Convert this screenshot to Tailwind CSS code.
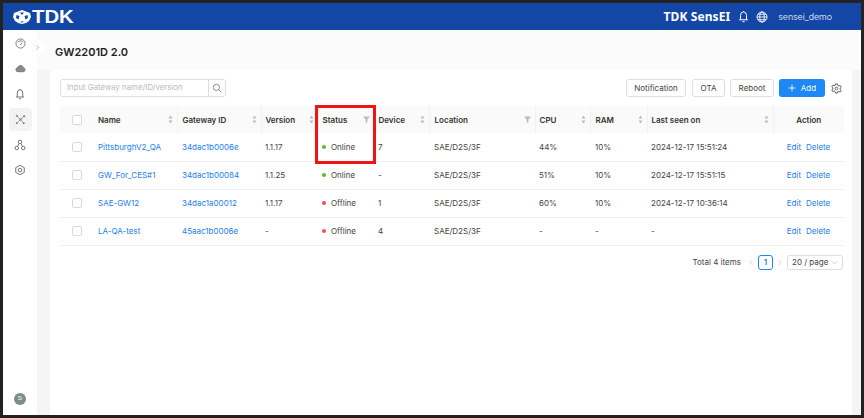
<!DOCTYPE html>
<html lang="en">
<head>
  <meta charset="UTF-8" />
  <title>TDK SensEI</title>
  <script src="https://cdn.jsdelivr.net/npm/@tailwindcss/browser@4"></script>
</head>
<body class="bg-[#222222] h-screen overflow-hidden font-['Inter',sans-serif] text-[8px] text-[#444444]">
  <div class="h-[418px] p-[3px] flex flex-col">

    <!-- top bar -->
    <header class="h-[27px] shrink-0 bg-[#1446a6] text-white flex items-center pl-[10px] pr-[29px]">
      <svg class="w-[18px] h-[14px]" viewBox="0 0 18 14">
        <path d="M9 0 13 1.500 17 3 18 7 16 11 13 13 9 14 5 13 2 11 0 7 1 3 5 1.500Z" fill="white" />
        <path d="M7 2.500h4L9 5ZM3.500 5 6.500 6 5.500 9.500 3 8ZM14.500 5 15 8 12.500 9.500 11.500 6ZM7 11.500h4L9 12.800Z" fill="#1446a6" />
      </svg>
      <span class="ml-[1px] font-['Liberation_Sans',sans-serif] font-bold text-[18px] leading-none scale-x-[1.13] origin-left">TDK</span>
      <span class="ml-auto font-['Noto_Sans',sans-serif] font-bold text-[12px] tracking-[0.1px]">TDK SensEI</span>
      <svg class="w-[13px] h-[13px] ml-[7px]" viewBox="0 0 24 24" fill="none" stroke="white" stroke-width="1.800">
        <path d="M6.500 18V10a5.500 6.500 0 0 1 11 0v8M4 18h16M10 21.500h4M12 3.500V2" />
      </svg>
      <svg class="w-[12px] h-[12px] ml-[6px]" viewBox="0 0 24 24" fill="none" stroke="white" stroke-width="1.800">
        <circle cx="12" cy="12" r="10" /><ellipse cx="12" cy="12" rx="4.500" ry="10" /><path d="M2 12h20M4 6.500h16M4 17.500h16" />
      </svg>
      <span class="ml-[10px] text-[8.800px] font-light">sensei_demo</span>
    </header>

    <div class="flex-1 flex min-h-0 relative">
      <!-- side nav -->
      <aside class="w-[34px] shrink-0 bg-white flex flex-col items-center pt-[1px] text-[#777777]">
        <div class="h-[25px] flex items-center">
          <svg class="w-[11px] h-[11px]" viewBox="0 0 24 24" fill="none" stroke="currentColor" stroke-width="2"><circle cx="12" cy="12" r="10" /><path d="M6 9a8 8 0 0 1 12 0M12 15l3-4" /></svg>
        </div>
        <div class="h-[25px] flex items-center">
          <svg class="w-[11px] h-[11px]" viewBox="0 0 24 24" fill="#8a8a8a" stroke="#777777" stroke-width="2"><path d="M7 19a4.500 4.500 0 0 1-1-9 6.500 6.500 0 0 1 12.500 0.500A4.300 4.300 0 0 1 18 19Z" /></svg>
        </div>
        <div class="h-[25px] flex items-center">
          <svg class="w-[12px] h-[12px]" viewBox="0 0 24 24" fill="none" stroke="currentColor" stroke-width="2"><path d="M6.500 18V10a5.500 6.500 0 0 1 11 0v8M4 18h16M10 21.500h4M12 3.500V2" /></svg>
        </div>
        <div class="w-[23px] h-[23px] mt-[2px] rounded-[4px] bg-[#f3f3f3] flex items-center justify-center">
          <svg class="w-[11px] h-[11px]" viewBox="0 0 24 24" fill="#777777" stroke="#777777" stroke-width="1.300"><path d="M12 12 4 4M12 12l8-7M12 12l-8 8M12 12l7 8" /><circle cx="12" cy="12" r="2.500" fill="none" /><circle cx="4" cy="4" r="1.500" /><circle cx="20" cy="5" r="1.500" /><circle cx="4" cy="20" r="1.500" /><circle cx="19" cy="20" r="1.500" /></svg>
        </div>
        <div class="h-[25px] mt-[1px] flex items-center">
          <svg class="w-[12px] h-[12px]" viewBox="0 0 24 24" fill="none" stroke="currentColor" stroke-width="2"><circle cx="12" cy="6" r="3.500" /><circle cx="5.500" cy="18" r="3.500" /><circle cx="18.500" cy="18" r="3.500" /><path d="M10 9 7 15M14 9l3 6" /></svg>
        </div>
        <div class="h-[26px] flex items-center">
          <svg class="w-[12px] h-[12px]" viewBox="0 0 24 24" fill="none" stroke="currentColor" stroke-width="2"><path d="M12 2.500 20.500 7.250v9.500L12 21.500 3.500 16.750v-9.500Z" /><circle cx="12" cy="12" r="3.500" /></svg>
        </div>
        <div class="mt-auto mb-[10px] w-[12px] h-[12px] rounded-full bg-[#7f8c8d] flex items-center justify-center text-white text-[5px]">Si</div>
      </aside>

      <!-- collapse handle -->
      <div class="absolute left-[27px] top-[10px] w-[14px] h-[14px] rounded-full bg-white flex items-center justify-center">
        <svg class="w-[7px] h-[7px]" viewBox="0 0 24 24" fill="none" stroke="#aaaaaa" stroke-width="3"><path d="m9 5 7 7-7 7" /></svg>
      </div>

      <main class="flex-1 min-w-0 bg-[#f5f5f5] flex flex-col">
        <h1 class="h-[40px] shrink-0 bg-[#fbfbfb] flex items-center pl-[18px] pt-[5px] text-[11px] leading-none font-semibold text-[#222222]">GW2201D 2.0</h1>

        <section class="flex-1 ml-[13px] mr-[9px] bg-white rounded-t-[4px] pl-[10px] pr-[8px] pt-[9px] relative">
          <!-- toolbar -->
          <div class="flex items-center h-[18px]">
            <div class="w-[149px] h-[18px] border border-[#dddddd] rounded-l-[3px] flex items-center px-[6px] text-[7.800px] text-[#bbbbbb]">Input Gateway name/ID/version</div>
            <div class="w-[18px] h-[18px] -ml-px border border-[#dddddd] rounded-r-[3px] flex items-center justify-center">
              <svg class="w-[10px] h-[10px]" viewBox="0 0 24 24" fill="none" stroke="#777777" stroke-width="2"><circle cx="10.500" cy="10.500" r="7.500" /><path d="m16 16 6 6" /></svg>
            </div>
            <button class="ml-auto w-[60px] h-[18px] border border-[#dddddd] rounded-[3px]">Notification</button>
            <button class="ml-[6px] w-[33px] h-[18px] border border-[#dddddd] rounded-[3px]">OTA</button>
            <button class="ml-[5px] w-[44px] h-[18px] border border-[#dddddd] rounded-[3px]">Reboot</button>
            <button class="ml-[5px] w-[46px] h-[18px] rounded-[3px] bg-[#1e88f5] text-white flex items-center justify-center gap-[5px]">
              <svg class="w-[8px] h-[8px]" viewBox="0 0 24 24" fill="none" stroke="white" stroke-width="2.500"><path d="M12 2v20M2 12h20" /></svg>
              Add
            </button>
            <svg class="w-[11px] h-[11px] ml-[6px] mr-[2px]" viewBox="0 0 24 24" fill="none" stroke="#555555" stroke-width="2"><path d="M10 2h4l.7 3 2.600 1.500 3-.9 2 3.400-2.300 2.100v3l2.300 2.100-2 3.400-3-.9L14.700 19 14 22h-4l-.7-3-2.600-1.500-3 .9-2-3.400L4 13.500v-3L1.700 8.400l2-3.400 3 .9L9.300 5Z" /><circle cx="12" cy="12" r="3" /></svg>
          </div>

          <!-- gateways table -->
          <table class="mt-[9px] w-[784px] table-fixed border-collapse text-left">
            <thead>
              <tr class="h-[27px] bg-[#fafafa] text-[#333333] font-semibold">
                <th class="w-[28px] font-normal"><span class="block ml-[12px] w-[10px] h-[10px] border border-[#d9d9d9] rounded-[2px] bg-white"></span></th>
                <th class="w-[89px] pl-[10px] font-semibold"><div class="flex items-center justify-between pr-[4px]">Name<svg class="w-[5px] h-[9px]" viewBox="0 0 10 18" fill="#bbbbbb"><path d="M5 1l4 6H1ZM5 17l4-6H1Z" /></svg></div></th>
                <th class="w-[84px] pl-[5px] border-l border-[#f0f0f0] font-semibold"><div class="flex items-center justify-between pr-[4px]">Gateway ID<svg class="w-[5px] h-[9px]" viewBox="0 0 10 18" fill="#bbbbbb"><path d="M5 1l4 6H1ZM5 17l4-6H1Z" /></svg></div></th>
                <th class="w-[57px] pl-[4px] border-l border-[#f0f0f0] font-semibold"><div class="flex items-center justify-between pr-[4px]">Version<svg class="w-[5px] h-[9px]" viewBox="0 0 10 18" fill="#bbbbbb"><path d="M5 1l4 6H1ZM5 17l4-6H1Z" /></svg></div></th>
                <th class="w-[56px] pl-[4px] border-l border-[#f0f0f0] font-semibold"><div class="flex items-center justify-between pr-[4px]">Status<svg class="w-[7px] h-[7px]" viewBox="0 0 12 12" fill="#bbbbbb"><path d="M0 1h12L7.500 6v5h-3V6Z" /></svg></div></th>
                <th class="w-[55px] pl-[4px] border-l border-[#f0f0f0] font-semibold"><div class="flex items-center justify-between pr-[4px]">Device<svg class="w-[5px] h-[9px]" viewBox="0 0 10 18" fill="#bbbbbb"><path d="M5 1l4 6H1ZM5 17l4-6H1Z" /></svg></div></th>
                <th class="w-[106px] pl-[5px] border-l border-[#f0f0f0] font-semibold"><div class="flex items-center justify-between pr-[4px]">Location<svg class="w-[7px] h-[7px]" viewBox="0 0 12 12" fill="#bbbbbb"><path d="M0 1h12L7.500 6v5h-3V6Z" /></svg></div></th>
                <th class="w-[55px] pl-[4px] border-l border-[#f0f0f0] font-semibold"><div class="flex items-center justify-between pr-[4px]">CPU<svg class="w-[5px] h-[9px]" viewBox="0 0 10 18" fill="#bbbbbb"><path d="M5 1l4 6H1ZM5 17l4-6H1Z" /></svg></div></th>
                <th class="w-[57px] pl-[5px] border-l border-[#f0f0f0] font-semibold"><div class="flex items-center justify-between pr-[4px]">RAM<svg class="w-[5px] h-[9px]" viewBox="0 0 10 18" fill="#bbbbbb"><path d="M5 1l4 6H1ZM5 17l4-6H1Z" /></svg></div></th>
                <th class="w-[126px] pl-[4px] border-l border-[#f0f0f0] font-semibold"><div class="flex items-center justify-between pr-[4px]">Last seen on<svg class="w-[5px] h-[9px]" viewBox="0 0 10 18" fill="#bbbbbb"><path d="M5 1l4 6H1ZM5 17l4-6H1Z" /></svg></div></th>
                <th class="border-l border-[#f0f0f0] text-center font-semibold">Action</th>
              </tr>
            </thead>
            <tbody>
              <tr class="h-[28px] border-b border-[#f0f0f0]">
                <td><span class="block ml-[12px] w-[10px] h-[10px] border border-[#d9d9d9] rounded-[2px]"></span></td>
                <td class="pl-[10px] text-[#1e80f0]">PittsburghV2_QA</td>
                <td class="pl-[5px] text-[#1e80f0]">34dac1b0006e</td>
                <td class="pl-[4px]">1.1.17</td>
                <td class="pl-[4px]"><span class="inline-block w-[4px] h-[4px] rounded-full bg-[#52c41a] mr-[5px] align-[1px]"></span>Online</td>
                <td class="pl-[4px]">7</td>
                <td class="pl-[5px]">SAE/D2S/3F</td>
                <td class="pl-[4px]">44%</td>
                <td class="pl-[5px]">10%</td>
                <td class="pl-[4px]">2024-12-17 15:51:24</td>
                <td class="text-center text-[#1e80f0]">Edit<span class="ml-[5px]">Delete</span></td>
              </tr>
              <tr class="h-[28px] border-b border-[#f0f0f0]">
                <td><span class="block ml-[12px] w-[10px] h-[10px] border border-[#d9d9d9] rounded-[2px]"></span></td>
                <td class="pl-[10px] text-[#1e80f0]">GW_For_CES#1</td>
                <td class="pl-[5px] text-[#1e80f0]">34dac1b00084</td>
                <td class="pl-[4px]">1.1.25</td>
                <td class="pl-[4px]"><span class="inline-block w-[4px] h-[4px] rounded-full bg-[#52c41a] mr-[5px] align-[1px]"></span>Online</td>
                <td class="pl-[4px]">-</td>
                <td class="pl-[5px]">SAE/D2S/3F</td>
                <td class="pl-[4px]">51%</td>
                <td class="pl-[5px]">10%</td>
                <td class="pl-[4px]">2024-12-17 15:51:15</td>
                <td class="text-center text-[#1e80f0]">Edit<span class="ml-[5px]">Delete</span></td>
              </tr>
              <tr class="h-[28px] border-b border-[#f0f0f0]">
                <td><span class="block ml-[12px] w-[10px] h-[10px] border border-[#d9d9d9] rounded-[2px]"></span></td>
                <td class="pl-[10px] text-[#1e80f0]">SAE-GW12</td>
                <td class="pl-[5px] text-[#1e80f0]">34dac1a00012</td>
                <td class="pl-[4px]">1.1.17</td>
                <td class="pl-[4px]"><span class="inline-block w-[4px] h-[4px] rounded-full bg-[#ff4d4f] mr-[5px] align-[1px]"></span>Offline</td>
                <td class="pl-[4px]">1</td>
                <td class="pl-[5px]">SAE/D2S/3F</td>
                <td class="pl-[4px]">60%</td>
                <td class="pl-[5px]">10%</td>
                <td class="pl-[4px]">2024-12-17 10:36:14</td>
                <td class="text-center text-[#1e80f0]">Edit<span class="ml-[5px]">Delete</span></td>
              </tr>
              <tr class="h-[28px] border-b border-[#f0f0f0]">
                <td><span class="block ml-[12px] w-[10px] h-[10px] border border-[#d9d9d9] rounded-[2px]"></span></td>
                <td class="pl-[10px] text-[#1e80f0]">LA-QA-test</td>
                <td class="pl-[5px] text-[#1e80f0]">45aac1b0006e</td>
                <td class="pl-[4px]">-</td>
                <td class="pl-[4px]"><span class="inline-block w-[4px] h-[4px] rounded-full bg-[#ff4d4f] mr-[5px] align-[1px]"></span>Offline</td>
                <td class="pl-[4px]">4</td>
                <td class="pl-[5px]">SAE/D2S/3F</td>
                <td class="pl-[4px]">-</td>
                <td class="pl-[5px]">-</td>
                <td class="pl-[4px]">-</td>
                <td class="text-center text-[#1e80f0]">Edit<span class="ml-[5px]">Delete</span></td>
              </tr>
            </tbody>
          </table>

          <!-- pagination -->
          <div class="mt-[9px] flex items-center justify-end pr-px">
            <span>Total 4 items</span>
            <svg class="w-[7px] h-[7px] ml-[7px]" viewBox="0 0 24 24" fill="none" stroke="#bbbbbb" stroke-width="2.500"><path d="m15 4-8 8 8 8" /></svg>
            <span class="ml-[3px] w-[15px] h-[15px] border border-[#1e88f5] rounded-[3px] text-[#1e80f0] font-semibold flex items-center justify-center">1</span>
            <svg class="w-[7px] h-[7px] ml-[3px]" viewBox="0 0 24 24" fill="none" stroke="#bbbbbb" stroke-width="2.500"><path d="m9 4 8 8-8 8" /></svg>
            <div class="ml-[4px] w-[56px] h-[15px] border border-[#dddddd] rounded-[3px] flex items-center justify-between px-[4px]">
              20 / page
              <svg class="w-[7px] h-[7px]" viewBox="0 0 24 24" fill="none" stroke="#bbbbbb" stroke-width="2.500"><path d="m3 8 9 9 9-9" /></svg>
            </div>
          </div>

          <!-- red callout drawn over the Status column -->
          <div class="absolute left-[265px] top-[35px] w-[61px] h-[59px] border-[3px] border-[#f01414]"></div>
        </section>
      </main>
    </div>
  </div>
</body>
</html>
